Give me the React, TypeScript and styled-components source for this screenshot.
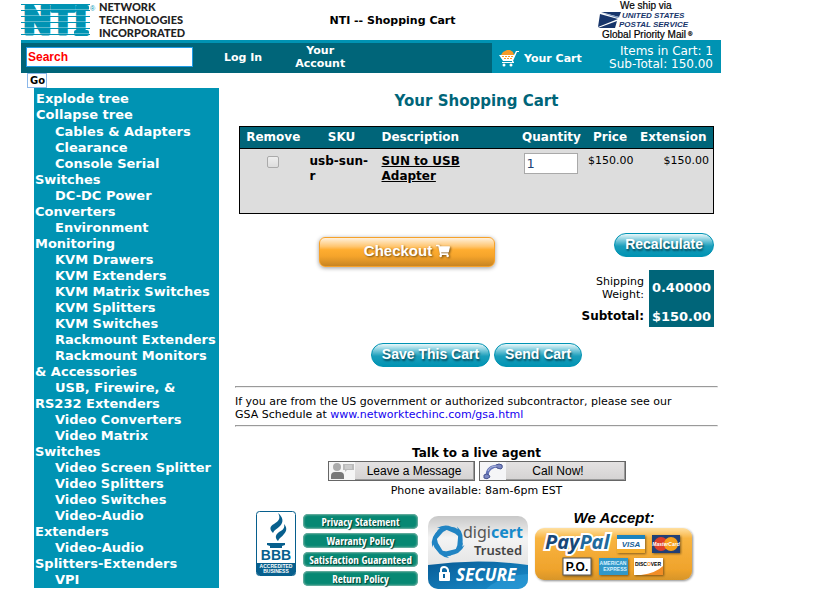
import React, { useState } from 'react';
import styled, { createGlobalStyle } from 'styled-components';
import { FaShoppingCart } from 'react-icons/fa';

const teal = '#0093b3';
const dark = '#006579';
const arial = '"Liberation Sans", Arial, sans-serif';

const GlobalStyle = createGlobalStyle`
  *, *::before, *::after { box-sizing: border-box; }
  body {
    margin: 0;
    background: #fff;
    color: #000;
    font: 11px/13px "DejaVu Sans", Verdana, sans-serif;
  }
  button, input { font: inherit; }
  svg { overflow: visible; }
`;

const Page = styled.div`
  padding: 0 94px 0 21px;
`;

const Header = styled.header`
  display: grid;
  grid-template-columns: 166px 1fr 120px;
  padding-right: 11px;
  height: 40px;
`;

const PageName = styled.div`
  align-self: center;
  text-align: center;
  font-weight: bold;
  padding-left: 8px;
`;

const Bar = styled.div`
  display: grid;
  grid-template-columns: 471px 1fr;
  height: 33px;
  background: ${teal};
  color: #fff;
`;

const MainBar = styled.div`
  display: flex;
  align-items: flex-start;
  margin-top: 3px;
  padding: 0 5px;
  background: ${dark};
`;

const SearchInput = styled.input`
  width: 167px;
  height: 20px;
  margin-top: 4px;
  padding: 0 1px;
  border: 1px solid #1f9be6;
  color: #f00;
  background: #fff;
  font: bold 12px ${arial};
  &::placeholder { color: #f00; opacity: 1; }
`;

const BarLink = styled.a`
  color: #fff;
  text-decoration: none;
  font-weight: bold;
  text-align: center;
`;

const LogIn = styled(BarLink)`
  margin: 8px 0 0 31px;
  white-space: nowrap;
`;

const Account = styled(BarLink)`
  width: 60px;
  margin: 1px 0 0 28px;
`;

const CartBar = styled.div`
  display: flex;
  align-items: center;
  justify-content: space-between;
  padding: 3px 8px 0 7px;
`;

const CartLink = styled(BarLink)`
  display: flex;
  align-items: center;
  gap: 5px;
  white-space: nowrap;
`;

const CartCounts = styled.div`
  text-align: right;
  white-space: nowrap;
  font-size: 12px;
`;

const Body = styled.div`
  display: grid;
  grid-template-columns: 198px minmax(0, 1fr);
  column-gap: 16px;
  padding-right: 3px;
`;

const GoButton = styled.button`
  display: block;
  height: 15px;
  margin-left: 6px;
  padding: 0 1px 0 2px;
  border: 1px solid #8cb8ea;
  background: #fff;
  color: #000;
  font-weight: bold;
  font-size: 10px;
  line-height: 13px;
`;

const Nav = styled.nav`
  margin-left: 13px;
  padding: 3px 0 0 1px;
  background: ${teal};
  font-size: 13px;
  line-height: 16px;
  font-weight: bold;
  a { color: #fff; text-decoration: none; white-space: pre-line; }
`;

const NavItem = styled.div<{ $indent?: boolean }>`
  text-indent: ${p => (p.$indent ? 20 : 1)}px;
  &:nth-child(3) { margin-top: 1px; }
`;

const Title = styled.h1`
  margin: 19px 0 16px;
  text-align: center;
  color: ${dark};
  font-size: 15px;
  line-height: 18px;
`;

const Inset = styled.div`
  padding: 0 4px;
`;

const CartTable = styled.table`
  width: 100%;
  table-layout: fixed;
  border-collapse: collapse;
  border: 1px solid #000;
  background: #ddd;
  th {
    height: 22px;
    padding: 0;
    background: ${dark};
    color: #fff;
    border-bottom: 1px solid #000;
    font-size: 12px;
  }
  td {
    height: 65px;
    padding: 5px 4px 0;
    vertical-align: top;
    text-align: center;
  }
`;

const Col = styled.col<{ $w?: number }>`
  width: ${p => (p.$w ? `${p.$w}px` : 'auto')};
`;

const LeftHead = styled.th`
  text-align: left;
  && { padding-left: 5px; }
`;

const Sku = styled.td`
  && { text-align: left; font-weight: bold; font-size: 12px; line-height: 15px; padding-right: 0; padding-left: 3px; }
`;

const Description = styled.td`
  && { text-align: left; font-weight: bold; font-size: 12px; line-height: 15px; padding-right: 40px; padding-left: 5px; }
  a { color: #000; }
`;

const MoneyCell = styled.td<{ $pad: number }>`
  && { text-align: right; padding-left: 0; padding-right: ${p => p.$pad}px; }
`;

const Check = styled.input`
  appearance: none;
  width: 12px;
  height: 12px;
  margin: 2px 0 0;
  border: 1px solid #aaa;
  border-radius: 2px;
  background: linear-gradient(#eee, #ddd);
  &:checked { background: ${teal}; }
`;

const Quantity = styled.input`
  display: block;
  width: 54px;
  height: 21px;
  margin: -1px 0 0 3px;
  padding: 0 2px;
  border: 1px solid #a9a9a9;
  background: #fff;
  color: #1f4576;
  font: 13px "DejaVu Sans", sans-serif;
`;

const Actions = styled.div`
  display: flex;
  align-items: flex-start;
  justify-content: space-between;
  padding: 19px 0 0 80px;
`;

const Checkout = styled.button`
  display: flex;
  align-items: center;
  justify-content: center;
  gap: 4px;
  width: 176px;
  height: 30px;
  margin-top: 4px;
  padding: 0 0 3px;
  border: 1px solid #f6a12a;
  border-radius: 6px;
  background: linear-gradient(#fff1dc, #ffc671 30%, #ffad30 42%, #f5a42b 65%, #c88522);
  box-shadow: 0 1px 4px #999;
  color: #fff;
  font: bold 15px ${arial};
  text-shadow: 1px 1px 2px #765016;
  svg { filter: drop-shadow(1px 1px 1px #765016); }
`;

const Pill = styled.button`
  height: 24px;
  padding: 0 10px 2px;
  border: 1px solid ${teal};
  border-radius: 12px;
  background: linear-gradient(#eaf8fa, #7dcbdc 28%, #1b9ebb 55%, ${teal});
  color: #fff;
  font: bold 14px/20px ${arial};
  text-shadow: 1px 2px 2px #044b5c;
  white-space: nowrap;
`;

const Totals = styled.table`
  margin: 3px 0 0 auto;
  border-collapse: collapse;
  th { padding: 0 5px 0 0; font-weight: normal; text-align: right; width: 66px; }
  td { width: 65px; padding: 0; text-align: center; background: ${dark}; color: #fff; font-weight: bold; font-size: 13px; }
  tr:first-child { height: 35px; }
  tr:last-child { height: 22px; }
  tr:last-child th { font-weight: bold; font-size: 12px; }
`;

const SaveRow = styled.div`
  display: flex;
  justify-content: center;
  gap: 4px;
  margin: 16px 0 19px;
`;

const Rule = styled.hr`
  margin: 0;
  border: 1px inset #eee;
`;

const Notice = styled.p`
  margin: 0;
  padding: 7px 0 4px;
  a { color: #1400f0; text-decoration: none; }
`;

const Agent = styled.section`
  margin-top: 19px;
  text-align: center;
  h2 { margin: 0; font-size: 12px; line-height: 15px; }
  p { margin: 3px 0 0; }
`;

const AgentButtons = styled.div`
  display: flex;
  justify-content: center;
  gap: 4px;
`;

const AgentButton = styled.button`
  display: grid;
  grid-template-columns: 26px 1fr;
  align-items: center;
  width: 147px;
  height: 20px;
  padding: 0;
  border: 1px solid #666;
  background: linear-gradient(#e4e2e2, #d4d2d2);
  box-shadow: inset -1px -1px #999;
  color: #000;
  font: 12px ${arial};
  svg { display: block; }
`;

const CallLabel = styled.span`
  padding-right: 14px;
`;

const Badges = styled.div`
  display: flex;
  align-items: flex-start;
  margin: 14px 0 0 21px;
  a, svg { display: block; }
`;

const Policies = styled.div`
  display: grid;
  gap: 4px;
  width: 115px;
  margin: 3px 10px 0 7px;
`;

const Policy = styled.a`
  height: 15px;
  border-radius: 5px;
  background: #078873;
  box-shadow: inset 0 0 2px 1px #7db5a8;
  color: #fff;
  text-decoration: none;
  text-align: center;
  white-space: nowrap;
  font: bold 11px/15px "Liberation Sans Narrow", "Open Sans Condensed", "DejaVu Sans Condensed", sans-serif;
  text-shadow: 1px 1px 1px #013a30;
`;

const SealLink = styled.a`
  margin: 5px 4px 0 0;
`;

const nav: [string, boolean][] = [
  ['Explode tree', false], ['Collapse tree', false], ['Cables & Adapters', true],
  ['Clearance', true], ['Console Serial Switches', true], ['DC-DC Power Converters', true],
  ['Environment Monitoring', true], ['KVM Drawers', true], ['KVM Extenders', true],
  ['KVM Matrix Switches', true], ['KVM Splitters', true], ['KVM Switches', true],
  ['Rackmount Extenders', true], ['Rackmount Monitors & Accessories', true],
  ['USB, Firewire, & RS232 Extenders', true], ['Video Converters', true],
  ['Video Matrix\nSwitches', true], ['Video Screen Splitter', true], ['Video Splitters', true],
  ['Video Switches', true], ['Video-Audio Extenders', true],
  ['Video-Audio\nSplitters-Extenders', true], ['VPI', true],
];

const policies = ['Privacy Statement', 'Warranty Policy', 'Satisfaction Guaranteed', 'Return Policy'];

const NtiLogo = () => (
  <svg width="166" height="40" viewBox="0 0 166 40" role="img" aria-label="NTI Network Technologies Incorporated">
    <g fill={teal}>
      {[4, 10, 16, 22, 28, 34].map(y => <rect key={y} x="0" y={y} width="69" height="1" />)}
    </g>
    <g fill={teal} stroke={teal} strokeWidth="3" strokeLinejoin="round" fontFamily="Roboto, sans-serif" fontWeight="900" fontSize="38">
      <text x="3" y="34">N</text><text x="30" y="34">T</text><text x="54" y="34">I</text>
    </g>
    <g fill={teal}>
      <rect x="55" y="5" width="13" height="6" rx="2" />
      <rect x="53" y="30" width="15" height="6" rx="2" />
    </g>
    <g fill="#fff" opacity="0.35">
      {[9, 15, 21, 27, 33].map(y => <rect key={y} x="3" y={y} width="65" height="1" />)}
    </g>
    <text x="69" y="11" fill={teal} fontFamily={arial} fontSize="7">®</text>
    <g fill="#222" fontFamily="Lato, sans-serif" fontWeight="900" fontSize="11">
      <text x="78" y="11">NETWORK</text>
      <text x="78" y="24">TECHNOLOGIES</text>
      <text x="78" y="37">INCORPORATED</text>
    </g>
  </svg>
);

const PostalLogo = () => (
  <svg width="120" height="40" viewBox="0 0 120 40" role="img" aria-label="We ship via United States Postal Service Global Priority Mail">
    <g fontFamily={arial} fontSize="10" fill="#000" stroke="#000" strokeWidth="0.2">
      <text x="30" y="9">We ship via</text>
      <text x="12" y="38">Global Priority Mail</text>
      <text x="98" y="36" fontSize="6">®</text>
    </g>
    <path d="M11 12h20l-2 5z M10 14l18 5-20 8z" fill="#17356b" />
    <path d="M12 13l18 4-3 1z" fill="#7591ba" />
    <path d="M8 28l19-7-2 7z" fill="#17356b" />
    <g fontFamily={arial} fontSize="8" fontWeight="bold" fontStyle="italic" fill="#17356b">
      <text x="32" y="18">UNITED STATES</text>
      <text x="29" y="27">POSTAL SERVICE</text>
    </g>
  </svg>
);

const CartIcon = () => (
  <svg width="20" height="17" viewBox="0 0 20 17" aria-hidden="true">
    <path d="M2 5l2-3 4-2h3l3 2 1 3z" fill="#f79a25" />
    <path d="M0 5h15l2-4h3v1h-2l-4 9 1 1v1H3v-1h10v-1H4z" fill="#fff" />
    <path d="M3 6h2v1H3zm3 0h2v1H6zm3 0h2v1H9zm3 0h2v1h-2zM5 8h2v1H5zm3 0h2v1H8zm3 0h2v1h-2z" fill="#f79a25" />
    <circle cx="5" cy="15" r="1.5" fill="#fff" /><circle cx="12" cy="15" r="1.5" fill="#fff" />
  </svg>
);

const PersonIcon = () => (
  <svg width="26" height="18" viewBox="0 0 26 18" aria-hidden="true">
    <rect width="26" height="18" fill="#f5f5f5" />
    <circle cx="8" cy="5" r="4" fill="#aaa" />
    <path d="M2 17v-3q0-4 4-4h5q4 0 4 4v3z" fill="#777" />
    <path d="M14 2h11v6h-7l-2 2V8h-2z" fill="#bbb" />
    <path d="M16 4h7M16 6h7" stroke="#ddd" />
  </svg>
);

const PhoneIcon = () => (
  <svg width="26" height="18" viewBox="0 0 26 18" aria-hidden="true">
    <rect width="26" height="18" fill="#f5f5f7" />
    <path d="M7 14C7 7 11 4 19 4" fill="none" stroke="#6474b8" strokeWidth="3" />
    <path d="M4 13q3-2 5 0l1 2q-3 3-6 1zM16 3q3-2 6 0 1 3-1 4l-4-1z" fill="#7b87c2" stroke="#46538f" />
    <path d="M8 9q2-5 9-5" fill="none" stroke="#b9c0e2" />
  </svg>
);

const BbbSeal = () => (
  <svg width="40" height="65" viewBox="0 0 40 65" role="img" aria-label="BBB Accredited Business">
    <rect x="0.5" y="0.5" width="39" height="64" rx="3" fill="#fff" stroke="#075f8d" />
    <path d="M22 2c3 5 1 8-4 11-4 2-5 5-1 9 1-3 4-4 7-7 4-4 3-9-2-13zM28 13c1 4-1 6-5 8-4 3-4 6-1 9 1-3 4-4 6-7 3-3 3-7 0-10z" fill="#075f8d" />
    <path d="M11 32h18v2l-3 1v2H14v-2l-3-1z" fill="#075f8d" />
    <text x="20" y="49" textAnchor="middle" fontFamily={arial} fontWeight="bold" fontSize="14" fill="#075f8d">BBB</text>
    <path d="M1 52h38v10q0 2-2 2H3q-2 0-2-2z" fill="#075f8d" />
    <g textAnchor="middle" fontFamily={arial} fontWeight="bold" fontSize="5" fill="#fff">
      <text x="20" y="57">ACCREDITED</text><text x="20" y="62">BUSINESS</text>
    </g>
  </svg>
);

const DigicertSeal = () => (
  <svg width="102" height="74" viewBox="0 0 102 74" role="img" aria-label="digicert Trusted Secure">
    <defs>
      <linearGradient id="silver" x2="0" y2="1"><stop stopColor="#c8c8c8" /><stop offset=".3" stopColor="#f4f4f4" /><stop offset="1" stopColor="#d7d7d7" /></linearGradient>
      <linearGradient id="blue" x2="1" y2="1"><stop stopColor="#075b96" /><stop offset="1" stopColor="#1c8fcd" /></linearGradient>
      <clipPath id="seal"><rect width="100" height="73" rx="10" /></clipPath>
    </defs>
    <g clipPath="url(#seal)">
      <rect width="100" height="73" fill="url(#silver)" />
      <path d="M0 49q50-7 100 0v24H0z" fill="url(#blue)" />
      <path d="M58 73q15-14 42-15v15z" fill="#32a0dc" opacity=".5" />
    </g>
    <g fill="#2184c3">
      {[0, 72, 144, 216, 288].map(a => <path key={a} transform={`rotate(${a} 20 25)`} d="M9 12q10-6 20 2-8-3-14 2l-7 8q-2-8 4-12z" />)}
    </g>
    <g fontFamily='"Noto Sans", sans-serif'>
      <text x="35" y="22" fontSize="16" fill="#555">digi<tspan fontWeight="bold" fill="#168acb">cert</tspan></text>
      <text x="46" y="39" fontSize="13" fontWeight="600" fill="#444">Trusted</text>
      <text x="28" y="65" fontSize="17" fontWeight="bold" fontStyle="italic" fill="#fff">SECURE</text>
    </g>
    <rect x="11" y="56" width="11" height="9" rx="1" fill="#fff" />
    <path d="M13 56v-2q0-3 3-3t4 3v2" fill="none" stroke="#fff" strokeWidth="2" />
    <path d="M16 58v4" stroke="#0962a0" strokeWidth="2" />
  </svg>
);

const Payments = () => (
  <svg width="162" height="74" viewBox="0 0 162 74" role="img" aria-label="We accept PayPal, Visa, MasterCard, P.O., American Express, Discover">
    <defs>
      <linearGradient id="gold" x2="0" y2="1"><stop stopColor="#ffe0a2" /><stop offset=".2" stopColor="#f8b440" /><stop offset=".8" stopColor="#efa32c" /><stop offset="1" stopColor="#d79528" /></linearGradient>
      <filter id="shade"><feDropShadow dx="1" dy="1" stdDeviation="1" floodOpacity=".45" /></filter>
    </defs>
    <text x="80" y="12" textAnchor="middle" fontFamily={arial} fontSize="15" fontWeight="bold" fontStyle="italic">We Accept:</text>
    <rect x="1" y="17" width="157" height="52" rx="9" fill="url(#gold)" filter="url(#shade)" />
    <text x="11" y="38" fontFamily='"Noto Sans", sans-serif' fontSize="20" fontWeight="bold" fontStyle="italic" fill="#174777" stroke="#fff" strokeWidth="4" paintOrder="stroke">Pay<tspan fill="#216a9c">Pal</tspan></text>
    <g filter="url(#shade)">
      <rect x="83" y="24" width="28" height="18" fill="#fff" /><path d="M83 24h28v4H83z" fill="#1d83be" /><path d="M83 38h28v4H83z" fill="#f5ad29" />
      <rect x="118" y="24" width="28" height="18" fill="#243f76" /><circle cx="127" cy="33" r="7" fill="#dd3f2b" /><circle cx="137" cy="33" r="7" fill="#f7a11b" />
      <rect x="29" y="47" width="28" height="17" fill="#fff" stroke="#555" />
      <rect x="65" y="47" width="29" height="17" fill="#3398c8" />
      <rect x="100" y="47" width="29" height="17" fill="#fff" /><path d="M107 64q15-2 22-9v9z" fill="#f28d26" />
    </g>
    <g fontFamily={arial} fontWeight="bold" textAnchor="middle">
      <text x="97" y="36" fontSize="8" fontStyle="italic" fill="#176299">VISA</text>
      <text x="132" y="35" fontSize="5" fontStyle="italic" fill="#fff">MasterCard</text>
      <text x="43" y="60" fontSize="12">P.O.</text>
      <text x="79" y="54" fontSize="5" fill="#d8f1ff">AMERICAN</text><text x="81" y="60" fontSize="5" fill="#d8f1ff">EXPRESS</text>
      <text x="114" y="55" fontSize="5">DISC<tspan fill="#f28d26">O</tspan>VER</text>
    </g>
  </svg>
);

export default function App() {
  const [query, setQuery] = useState('');
  const [quantity, setQuantity] = useState('1');
  return (
    <Page>
      <GlobalStyle />
      <Header><NtiLogo /><PageName>NTI -- Shopping Cart</PageName><PostalLogo /></Header>
      <Bar>
        <MainBar>
          <form id="search" onSubmit={e => e.preventDefault()}>
            <SearchInput aria-label="Search" placeholder="Search" value={query} onChange={e => setQuery(e.target.value)} />
          </form>
          <LogIn href="#login">Log In</LogIn>
          <Account href="#account">Your Account</Account>
        </MainBar>
        <CartBar>
          <CartLink href="#cart"><CartIcon />Your Cart</CartLink>
          <CartCounts>Items in Cart: 1<br />Sub-Total: 150.00</CartCounts>
        </CartBar>
      </Bar>
      <Body>
        <aside>
          <GoButton type="submit" form="search">Go</GoButton>
          <Nav>
            {nav.map(([label, indent]) => <NavItem key={label} $indent={indent}><a href="#category">{label}</a></NavItem>)}
          </Nav>
        </aside>
        <main>
          <Title>Your Shopping Cart</Title>
          <Inset>
            <CartTable>
              <colgroup><Col $w={67} /><Col $w={70} /><Col /><Col $w={70} /><Col $w={47} /><Col $w={80} /></colgroup>
              <thead><tr><th>Remove</th><th>SKU</th><LeftHead>Description</LeftHead><th>Quantity</th><th>Price</th><th>Extension</th></tr></thead>
              <tbody><tr>
                <td><Check type="checkbox" aria-label="Remove usb-sun-r" /></td>
                <Sku>usb-sun-<br />r</Sku>
                <Description><a href="#product">SUN to USB Adapter</a></Description>
                <td><Quantity aria-label="Quantity" value={quantity} onChange={e => setQuantity(e.target.value)} /></td>
                <MoneyCell $pad={0}>$150.00</MoneyCell>
                <MoneyCell $pad={4}>$150.00</MoneyCell>
              </tr></tbody>
            </CartTable>
            <Actions>
              <Checkout type="button">Checkout <FaShoppingCart size={14} /></Checkout>
              <Pill type="button">Recalculate</Pill>
            </Actions>
            <Totals><tbody>
              <tr><th scope="row">Shipping Weight:</th><td>0.40000</td></tr>
              <tr><th scope="row">Subtotal:</th><td>$150.00</td></tr>
            </tbody></Totals>
          </Inset>
          <SaveRow><Pill type="button">Save This Cart</Pill><Pill type="button">Send Cart</Pill></SaveRow>
          <Rule />
          <Notice>If you are from the US government or authorized subcontractor, please see our<br />GSA Schedule at <a href="#gsa">www.networktechinc.com/gsa.html</a></Notice>
          <Rule />
          <Agent>
            <h2>Talk to a live agent</h2>
            <AgentButtons>
              <AgentButton type="button"><PersonIcon />Leave a Message</AgentButton>
              <AgentButton type="button"><PhoneIcon /><CallLabel>Call Now!</CallLabel></AgentButton>
            </AgentButtons>
            <p>Phone available: 8am-6pm EST</p>
          </Agent>
          <Badges>
            <a href="#bbb"><BbbSeal /></a>
            <Policies>{policies.map(label => <Policy key={label} href="#policy">{label}</Policy>)}</Policies>
            <SealLink href="#digicert"><DigicertSeal /></SealLink>
            <Payments />
          </Badges>
        </main>
      </Body>
    </Page>
  );
}
